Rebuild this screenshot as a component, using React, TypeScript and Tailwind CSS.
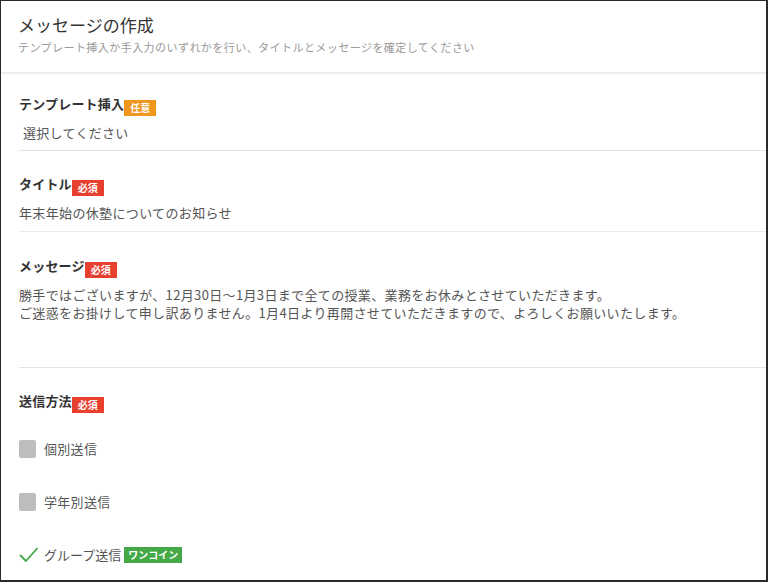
import React from "react";

function Badge({ label, tone, tight = false }: { label: string; tone: "orange" | "red" | "green"; tight?: boolean }) {
  const color =
    tone === "orange" ? "bg-[#f0961e]" : tone === "red" ? "bg-[#e8402f]" : "bg-[#43a845]";
  return (
    <span
      className={`${color} ${tight ? "px-[4px]" : "px-[6px]"} inline-flex h-[16px] items-center text-[10px] font-bold leading-none text-white`}
    >
      {label}
    </span>
  );
}

function FieldLabel({ label, badge, tone }: { label: string; badge: string; tone: "orange" | "red" }) {
  return (
    <div className="flex items-end">
      <span className="text-[13px] font-bold leading-[18px] tracking-[0.2px] text-[#333]">{label}</span>
      <span className="mb-[-4px]">
        <Badge label={badge} tone={tone} />
      </span>
    </div>
  );
}

function CheckRow({ label }: { label: string }) {
  return (
    <div className="flex h-[18px] items-center gap-[8px]">
      <span className="h-[18px] w-[17px] rounded-[2px] bg-[#bdbdbd]" />
      <span className="text-[13px] tracking-[0.3px] text-[#555]">{label}</span>
    </div>
  );
}

export default function App() {
  return (
    <div
      className="h-[582px] w-[768px] overflow-hidden border-t border-l border-r-2 border-b-2 border-[#2a2a2a] bg-white"
      style={{ fontFamily: '"Noto Sans CJK JP", "Noto Sans", sans-serif' }}
    >
      <header className="border-b-2 border-[#eeeeee] px-[17px] pt-[12px] pb-[18px]">
        <h1 className="text-[17px] leading-[24px] text-[#333]">メッセージの作成</h1>
        <p className="mt-[3px] text-[11px] leading-[14px] tracking-[0.45px] text-[#999]">
          テンプレート挿入か手入力のいずれかを行い、タイトルとメッセージを確定してください
        </p>
      </header>

      <div className="pl-[18px]">
        <section className="border-b border-[#e3e3e3] pt-[19px] pb-[8px]">
          <FieldLabel label="テンプレート挿入" badge="任意" tone="orange" />
          <p className="mt-[11px] pl-[4px] text-[13px] leading-[18px] tracking-[0.3px] text-[#555]">選択してください</p>
        </section>

        <section className="border-b border-[#eaeaea] pt-[22px] pb-[9px]">
          <FieldLabel label="タイトル" badge="必須" tone="red" />
          <p className="mt-[11px] text-[13px] leading-[18px] tracking-[0.35px] text-[#555]">年末年始の休塾についてのお知らせ</p>
        </section>

        <section className="h-[136px] border-b border-[#e3e3e3] pt-[23px]">
          <FieldLabel label="メッセージ" badge="必須" tone="red" />
          <div className="mt-[11px] text-[13px] leading-[18px] tracking-[0.35px] text-[#555]">
            <p>勝手ではございますが、12月30日～1月3日まで全ての授業、業務をお休みとさせていただきます。</p>
            <p>ご迷惑をお掛けして申し訳ありません。1月4日より再開させていただきますので、よろしくお願いいたします。</p>
          </div>
        </section>

        <section className="pt-[22px]">
          <FieldLabel label="送信方法" badge="必須" tone="red" />
          <div className="mt-[30px] flex flex-col gap-[35px]">
            <CheckRow label="個別送信" />
            <CheckRow label="学年別送信" />
            <div className="flex h-[18px] items-center gap-[5px]">
              <svg width="20" height="16" viewBox="0 0 20 16" fill="none">
                <path d="M1.5 8.5 L7 14 L18 1.5" stroke="#43a845" strokeWidth="1.8" strokeLinecap="round" strokeLinejoin="round" />
              </svg>
              <span className="flex items-center gap-[3px]">
                <span className="text-[13px] text-[#555]">グループ送信</span>
                <Badge label="ワンコイン" tone="green" tight />
              </span>
            </div>
          </div>
        </section>
      </div>
    </div>
  );
}
